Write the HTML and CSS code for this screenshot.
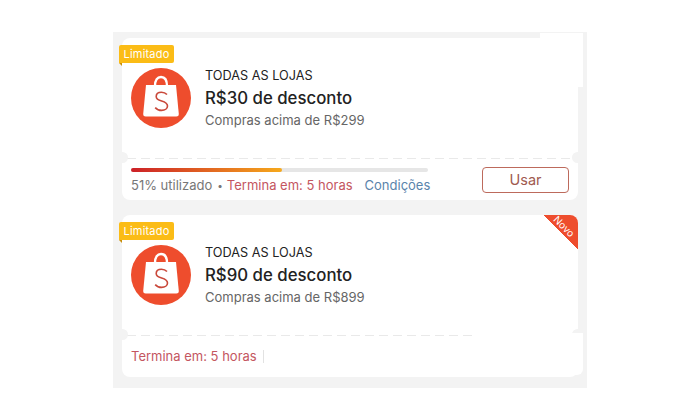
FILE: index.html
```html
<!doctype html>
<html>
<head>
	<meta charset="utf-8">
	<title>Cupons</title>
	<link rel="stylesheet" href="styles.css">
</head>
<body>
	<div class="panel">
		<div class="voucher">
			<div class="patch"></div>
			<div class="tag">Limitado</div>
			<div class="voucher-top">
				<div class="logo">
					<svg viewBox="0 0 60 60" width="60" height="60">
						<circle cx="30" cy="30" r="30" fill="#ee4d2d"/>
						<path d="M24 18c0-6 2.500-9 6-9s6 3 6 9" fill="none" stroke="#fff" stroke-width="2.400"/>
						<path d="M15 17h30l2.800 29a2.500 2.500 0 0 1-2.500 2.500H14.700a2.500 2.500 0 0 1-2.500-2.500z" fill="#fff"/>
						<path d="M36 26.500c-1.500-1.600-3.500-2.300-5.500-2.300-3.100 0-5.300 1.700-5.300 4.200 0 2.700 2.400 3.700 5.400 4.600 3.300 1 5.900 2.100 5.900 5 0 2.700-2.600 4.400-5.900 4.400-2.500 0-4.800-1-6.400-2.800" fill="none" stroke="#c9483a" stroke-width="1.600"/>
					</svg>
				</div>
				<div class="info">
					<div class="store">TODAS AS LOJAS</div>
					<div class="title">R$30 de desconto</div>
					<div class="min">Compras acima de R$299</div>
				</div>
			</div>
			<div class="divider"></div>
			<div class="voucher-bottom">
				<div class="usage">
					<div class="bar"><div class="bar-fill" style="width:51%"></div></div>
					<div class="meta">
						<span>51% utilizado</span>
						<span class="dot">•</span>
						<span class="ends">Termina em: 5 horas</span>
						<span class="sep"></span>
						<span class="terms">Condições</span>
					</div>
				</div>
				<div class="btn">Usar</div>
			</div>
		</div>

		<div class="voucher">
			<div class="ribbon"><span>Novo</span></div>
			<div class="tag">Limitado</div>
			<div class="voucher-top">
				<div class="logo">
					<svg viewBox="0 0 60 60" width="60" height="60">
						<circle cx="30" cy="30" r="30" fill="#ee4d2d"/>
						<path d="M24 18c0-6 2.500-9 6-9s6 3 6 9" fill="none" stroke="#fff" stroke-width="2.400"/>
						<path d="M15 17h30l2.800 29a2.500 2.500 0 0 1-2.500 2.500H14.700a2.500 2.500 0 0 1-2.500-2.500z" fill="#fff"/>
						<path d="M36 26.500c-1.500-1.600-3.500-2.300-5.500-2.300-3.100 0-5.300 1.700-5.300 4.200 0 2.700 2.400 3.700 5.400 4.600 3.300 1 5.900 2.100 5.900 5 0 2.700-2.600 4.400-5.900 4.400-2.500 0-4.800-1-6.400-2.800" fill="none" stroke="#c9483a" stroke-width="1.600"/>
					</svg>
				</div>
				<div class="info">
					<div class="store">TODAS AS LOJAS</div>
					<div class="title">R$90 de desconto</div>
					<div class="min">Compras acima de R$899</div>
				</div>
			</div>
			<div class="divider"></div>
			<div class="patch-low"></div>
			<div class="voucher-bottom voucher-bottom-plain">
				<div class="meta">
					<span class="ends">Termina em: 5 horas</span>
					<span class="sep"></span>
				</div>
			</div>
		</div>
	</div>
</body>
</html>
```

FILE: styles.css
```css
*{
	margin:0;
	padding:0;
	box-sizing:border-box;
}
body{
	width:700px;
	height:420px;
	padding-top:32px;
	background:#fff;
	font-family:"Inter","Liberation Sans",sans-serif;
	overflow:hidden;
}
.panel{
	display:flex;
	flex-direction:column;
	gap:15px;
	width:474px;
	height:356px;
	margin-left:113px;
	padding:6px 9px 0;
	background:#f3f3f3;
}
.voucher{
	position:relative;
	display:flex;
	flex-direction:column;
	flex-shrink:0;
	height:162px;
	background:#fff;
	border-radius:8px;
}
.patch{
	position:absolute;
	top:-5px;
	right:-5px;
	width:43px;
	height:54px;
	background:#fff;
}
.patch-low{
	position:absolute;
	top:118px;
	right:-5px;
	bottom:2px;
	width:110px;
	background:#fff;
	border-radius:0 0 6px 0;
}
.tag{
	position:absolute;
	top:7px;
	left:-3px;
	width:55px;
	height:18px;
	background:#fbbc16;
	border-radius:2px 2px 2px 0;
	color:#fff;
	font-size:11px;
	line-height:18px;
	text-align:center;
	letter-spacing:.2px;
}
.tag:after{
	content:"";
	position:absolute;
	top:100%;
	left:0;
	border-top:3px solid #c98f0a;
	border-left:3px solid transparent;
}
.voucher-top{
	display:flex;
	flex-shrink:0;
	align-items:center;
	gap:14px;
	height:120px;
	padding:0 0 0 9px;
}
.logo{
	display:flex;
	flex-shrink:0;
}
.info{
	color:#222;
}
.store{
	font-size:12.700px;
	line-height:16px;
}
.title{
	margin-top:3px;
	font-size:16.800px;
	font-weight:500;
	line-height:22px;
}
.min{
	margin-top:3px;
	color:#666;
	font-size:13px;
	line-height:16px;
}
.divider{
	position:relative;
	flex-shrink:0;
	height:1px;
	margin:0 5px;
	background:repeating-linear-gradient(90deg,#e9e9e9 0 9px,transparent 9px 14px);
}
.divider:before,.divider:after{
	content:"";
	position:absolute;
	top:-6px;
	width:6px;
	height:11px;
	background:#f3f3f3;
}
.divider:before{
	left:-5px;
	border-radius:0 6px 6px 0;
}
.divider:after{
	right:-5px;
	border-radius:6px 0 0 6px;
}
.voucher-bottom{
	display:flex;
	justify-content:space-between;
	align-items:flex-end;
	padding:8px 9px 7px;
}
.voucher-bottom-plain{
	position:relative;
	padding-top:7px;
}
.usage{
	width:297px;
}
.bar{
	height:4px;
	background:#e6e6e6;
	border-radius:2px;
}
.bar-fill{
	height:100%;
	background:linear-gradient(90deg,#cc2027,#f6a91c);
	border-radius:2px;
}
.meta{
	display:flex;
	align-items:center;
	margin-top:4px;
	color:#777;
	font-size:13px;
	line-height:18px;
	white-space:nowrap;
}
.dot{
	margin:0 4px 0 5px;
	font-size:10px;
}
.ends{
	color:#c4565f;
}
.sep{
	width:1px;
	height:13px;
	margin:0 6px;
	background:#e2e2e2;
}
.terms{
	color:#5a84ab;
}
.btn{
	width:87px;
	height:26px;
	margin-bottom:1px;
	border:1.500px solid #bd6a5c;
	border-radius:4px;
	color:#a05a50;
	font-size:14.500px;
	line-height:23px;
	text-align:center;
}
.ribbon{
	position:absolute;
	top:0;
	right:0;
	width:34px;
	height:34px;
	overflow:hidden;
	background:linear-gradient(45deg,transparent 50%,#ee4d2d 50%);
	border-top-right-radius:8px;
}
.ribbon span{
	position:absolute;
	top:6px;
	left:5px;
	width:30px;
	color:#fff;
	font-size:10px;
	line-height:11px;
	text-align:center;
	transform:rotate(45deg);
}
```
